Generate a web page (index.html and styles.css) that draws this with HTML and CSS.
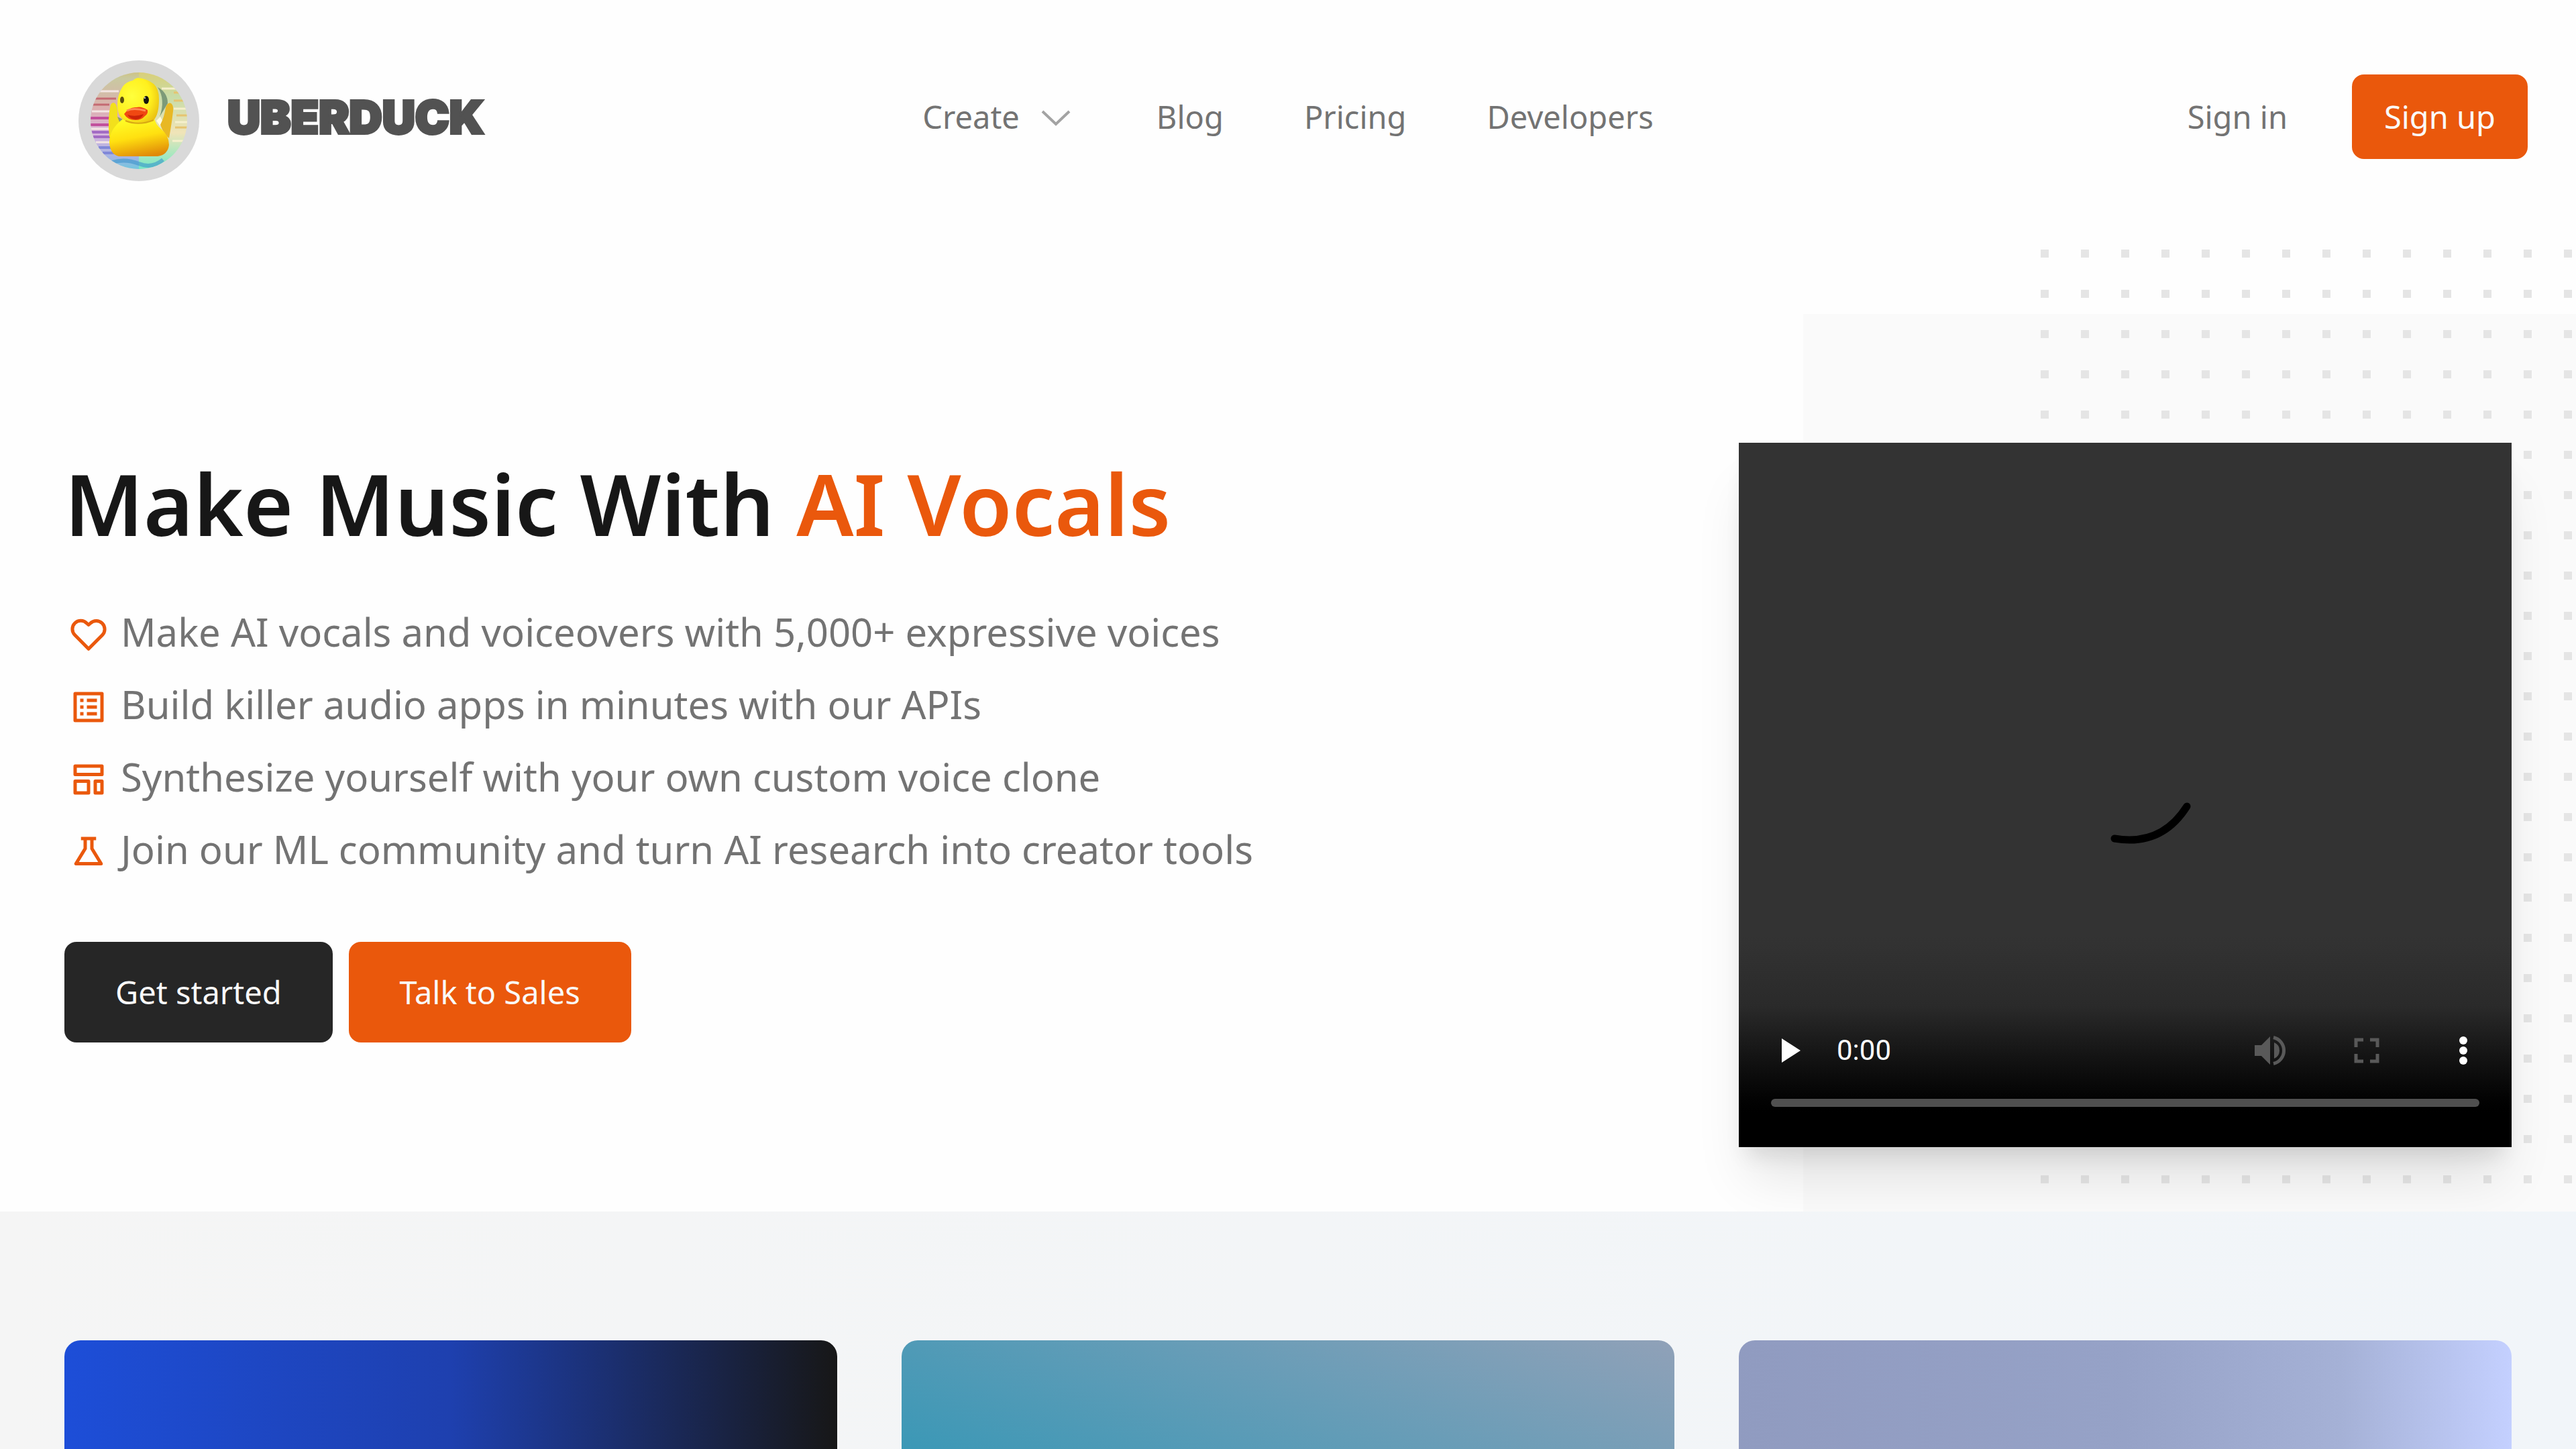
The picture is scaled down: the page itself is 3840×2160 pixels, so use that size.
FILE: index.html
```html
<!DOCTYPE html>
<html lang="en">
<head>
    <meta charset="UTF-8">
    <meta name="viewport" content="width=device-width, initial-scale=1.0">
    <title>Uberduck | Make Music With AI Vocals</title>
    <link rel="stylesheet" href="styles.css">
</head>
<body>
    <header class="header">
        <a href="#" class="logo">
            <svg class="logo-image" viewBox="0 0 180 180" aria-hidden="true">
                <defs>
                    <clipPath id="logoClip"><circle cx="90" cy="90" r="72"/></clipPath>
                    <linearGradient id="rainbow" x1="0" y1="0" x2="0" y2="1">
                        <stop offset="0" stop-color="#d9b84a"/>
                        <stop offset=".15" stop-color="#c9c9a0"/>
                        <stop offset=".4" stop-color="#dcb0b0"/>
                        <stop offset=".6" stop-color="#d9b4dc"/>
                        <stop offset=".8" stop-color="#a4b4e4"/>
                        <stop offset="1" stop-color="#3fd8d8"/>
                    </linearGradient>
                    <linearGradient id="rainbowRight" x1="0" y1="0" x2="0" y2="1">
                        <stop offset="0" stop-color="#e2c860"/>
                        <stop offset=".3" stop-color="#c8dca8"/>
                        <stop offset=".6" stop-color="#f0e4b8"/>
                        <stop offset=".8" stop-color="#a0e8c0"/>
                        <stop offset="1" stop-color="#48e4cc"/>
                    </linearGradient>
                    <radialGradient id="duckHead" cx=".35" cy=".4" r=".75">
                        <stop offset="0" stop-color="#ffff3c"/>
                        <stop offset=".6" stop-color="#fff01e"/>
                        <stop offset="1" stop-color="#e8bc10"/>
                    </radialGradient>
                    <linearGradient id="duckBody" x1=".3" y1="0" x2=".6" y2="1">
                        <stop offset="0" stop-color="#ffff28"/>
                        <stop offset=".5" stop-color="#ffe010"/>
                        <stop offset="1" stop-color="#e08a08"/>
                    </linearGradient>
                </defs>
                <circle cx="90" cy="90" r="90" fill="#d9d9d9"/>
                <g clip-path="url(#logoClip)">
                    <rect width="92" height="180" fill="url(#rainbow)"/>
                    <rect x="90" width="90" height="180" fill="url(#rainbowRight)"/>
                    <path d="M22 57h34M18 66h28" stroke="#c46a72" stroke-width="3"/>
                    <path d="M16 86h30M16 96h30" stroke="#c2509c" stroke-width="4"/>
                    <path d="M18 107h30M22 114h26" stroke="#a26cc4" stroke-width="4"/>
                    <path d="M30 130h22M36 138h20" stroke="#8088d8" stroke-width="4"/>
                    <path d="M20 76h28M18 102h28M26 122h24M30 46h30" stroke="#f3e6e4" stroke-width="3"/>
                    <path d="M142 48h16M142 60h20M146 82h18M144 100h18" stroke="#e6c470" stroke-width="3"/>
                    <path d="M124 42h26M142 72h22M144 92h20M140 120h18" stroke="#f6f0cc" stroke-width="3"/>
                    <path d="M50 152q20-6 40 2t36-6" stroke="#3a94cc" stroke-opacity=".6" stroke-width="6" fill="none"/>
                    <path d="M118 40q12 18 3 44l12-20q0-16-15-24z" fill="#7c9a78"/>
                    <path d="M58 84l8 4-6 6z" fill="#8c9c70"/>
                    <path d="M116 90l6-6 4 8-4 6z" fill="#fffbe0"/>
                    <path d="M46 114q-3-28 2-48 4-6 8 0 3 6 2 18l4 10q-6 10-12 22z" fill="#f2e01c"/>
                    <path d="M122 96q6-12 8-26 3-8 8-6 4 3 3 12-2 18-6 40-8-6-13-20z" fill="#e8b824"/>
                    <path d="M68 86q-22 16-22 36 1 18 14 21h58q15-2 17-17 0-14-12-24-8-6-10-16z" fill="url(#duckBody)"/>
                    <path d="M88 26q-4 1-7 4-10 2-15 9-8 12-8 27 0 18 10 23 20 10 44 0 8-8 8-31 0-16-8-23-10-8-24-9z" fill="url(#duckHead)"/>
                    <path d="M70 90q20 8 42-1" stroke="#d8a814" stroke-width="2" fill="none"/>
                    <path d="M68 80q8-11 18-10 8-2 17 4 1 6-4 9-5 6-14 6-12 0-17-9z" fill="#f04812"/>
                    <path d="M73 81q11 4 24-1-3 7-11 8-9 0-13-7z" fill="#cc2408"/>
                    <path d="M72 75q10-5 28 0" stroke="#ff8a50" stroke-width="3" fill="none"/>
                    <ellipse cx="65" cy="59" rx="3" ry="5" fill="#5c5010"/>
                    <ellipse cx="101" cy="59" rx="4" ry="6" fill="#14140c"/>
                    <circle cx="99" cy="56" r="1" fill="#fff"/>
                </g>
            </svg>
            <span class="logo-text">UBERDUCK</span>
        </a>

        <nav class="nav">
            <button type="button" class="nav-link nav-button">
                Create
                <svg class="chevron" viewBox="0 0 60 60" aria-hidden="true"><path d="M10 22l20 19 20-19"/></svg>
            </button>
            <a href="#" class="nav-link">Blog</a>
            <a href="#" class="nav-link">Pricing</a>
            <a href="#" class="nav-link">Developers</a>
        </nav>

        <div class="account">
            <a href="#" class="nav-link">Sign in</a>
            <a href="#" class="button button-signup">Sign up</a>
        </div>
    </header>

    <main class="main">
        <section class="hero">
            <!-- background decoration -->
            <div class="hero-panel"></div>
            <svg class="hero-dots" aria-hidden="true">
                <defs>
                    <pattern id="dots" width="60" height="60" patternUnits="userSpaceOnUse">
                        <rect width="12" height="12"/>
                    </pattern>
                </defs>
                <rect width="100%" height="100%" fill="url(#dots)"/>
            </svg>

            <div class="hero-content">
                <h1>Make Music With <span class="accent">AI Vocals</span></h1>
                <ul class="features">
                    <li>
                        <svg class="feature-icon" viewBox="0 0 24 24" aria-hidden="true"><path d="M12 20.500L3.800 12.200a5 5 0 0 1 0-7A5 5 0 0 1 11 5.300L12 6.200l1-.9a5 5 0 0 1 7.200 0 5 5 0 0 1 0 7z"/></svg>
                        Make AI vocals and voiceovers with 5,000+ expressive voices
                    </li>
                    <li>
                        <svg class="feature-icon" viewBox="0 0 24 24" aria-hidden="true"><rect x="4" y="4" width="16" height="16"/><path d="M7 8h2M11 8h6M7 12h2M11 12h6M7 16h2M11 16h6"/></svg>
                        Build killer audio apps in minutes with our APIs
                    </li>
                    <li>
                        <svg class="feature-icon" viewBox="0 0 24 24" aria-hidden="true"><rect x="4" y="4" width="16" height="5"/><rect x="4" y="13" width="8" height="7"/><rect x="16" y="13" width="4" height="7"/></svg>
                        Synthesize yourself with your own custom voice clone
                    </li>
                    <li>
                        <svg class="feature-icon" viewBox="0 0 24 24" aria-hidden="true"><path d="M7.500 4h9M10 4v6L4.500 19h15L14 10V4"/></svg>
                        Join our ML community and turn AI research into creator tools
                    </li>
                </ul>
                <div class="actions">
                    <a href="#" class="button button-dark">Get started</a>
                    <a href="#" class="button">Talk to Sales</a>
                </div>
            </div>

            <div class="player">
                <svg class="spinner" viewBox="-120 -120 240 240" aria-hidden="true"><path d="M-16 65Q54 77 92 17"/></svg>
                <div class="controls">
                    <button type="button" class="control" aria-label="Play">
                        <svg viewBox="0 0 60 60"><path d="M16 12v36l28-18z"/></svg>
                    </button>
                    <span class="time">0:00</span>
                    <button type="button" class="control control-muted control-right" aria-label="Mute">
                        <svg viewBox="0 0 60 60"><path d="M7 22v16h10l13 13V9L17 22zM36 18v24a13 13 0 0 0 0-24z"/><path class="line" d="M35 10.500a20 20 0 0 1 0 39"/></svg>
                    </button>
                    <button type="button" class="control control-muted" aria-label="Full screen">
                        <svg viewBox="0 0 60 60"><path class="line" d="M14 25V14h11M35 14h11v11M46 35v11H35M25 46H14V35"/></svg>
                    </button>
                    <button type="button" class="control" aria-label="More options">
                        <svg viewBox="0 0 60 60"><circle cx="30" cy="15" r="6"/><circle cx="30" cy="30" r="6"/><circle cx="30" cy="45" r="6"/></svg>
                    </button>
                </div>
                <div class="timeline"></div>
            </div>
        </section>

        <section class="cards">
            <a href="#" class="card card-blue" aria-label="Card 1"></a>
            <a href="#" class="card card-teal" aria-label="Card 2"></a>
            <a href="#" class="card card-lavender" aria-label="Card 3"></a>
        </section>
    </main>
</body>
</html>
```
FILE: styles.css
```css
* {
    margin: 0;
    padding: 0;
    box-sizing: border-box;
}

body {
    display: flex;
    flex-direction: column;
    min-height: 100vh;
    font-family: "Noto Sans", "Open Sans", sans-serif;
    font-size: 47px;
    line-height: 72px;
    background: #fefefe;
    color: #737373;
    overflow-x: hidden;
}

a {
    color: inherit;
    text-decoration: none;
}

button {
    font: inherit;
    color: inherit;
    background: none;
    border: none;
    cursor: pointer;
}

/* header */
.header {
    display: grid;
    grid-template-columns: 1fr auto 1fr;
    align-items: center;
    padding: 78px 72px 0;
}

.logo {
    display: flex;
    align-items: center;
    gap: 42px;
    padding-left: 45px;
}

.logo-image {
    width: 180px;
    height: 180px;
    margin-top: 12px;
}

.logo-text {
    font-family: Inter, sans-serif;
    font-size: 68px;
    font-weight: 900;
    color: #525252;
    -webkit-text-stroke: 4px #525252;
}

.nav {
    display: flex;
    align-items: center;
    gap: 120px;
}

.nav-button {
    display: flex;
    align-items: center;
    gap: 24px;
}

.chevron {
    width: 60px;
    height: 60px;
    fill: none;
    stroke: #a3a3a3;
    stroke-width: 4;
}

.account {
    display: flex;
    align-items: center;
    justify-content: flex-end;
    gap: 96px;
}

.button {
    padding: 39px 76px;
    border-radius: 18px;
    background: #ea580c;
    color: #fafafa;
}

.button-signup {
    padding: 27px 48px;
}

.button-dark {
    background: #262626;
}

/* hero */
.main {
    flex: 1;
    display: flex;
    flex-direction: column;
}

.hero {
    position: relative;
    display: grid;
    grid-template-columns: repeat(3, 1fr);
    column-gap: 96px;
    padding: 390px 96px 96px;
}

.hero-panel {
    position: absolute;
    top: 198px;
    right: 0;
    bottom: 0;
    width: 30%;
    background: #fafafa;
}

.hero-dots {
    position: absolute;
    top: 102px;
    right: 0;
    width: 798px;
    height: 1400px;
    fill: #e5e5e5;
}

.hero-content {
    grid-column: span 2;
    position: relative;
    padding-top: 18px;
}

h1 {
    font-size: 127px;
    font-weight: 600;
    line-height: 144px;
    color: #171717;
}

.accent {
    color: #ea580c;
}

.features {
    margin-top: 66px;
    list-style: none;
    font-size: 58px;
    line-height: 108px;
}

.features li {
    display: flex;
    align-items: center;
    gap: 18px;
    padding-left: 6px;
}

.feature-icon {
    width: 60px;
    height: 60px;
    margin-top: 8px;
    fill: none;
    stroke: #ea580c;
    stroke-width: 2;
    stroke-linejoin: round;
}

.actions {
    display: flex;
    gap: 24px;
    margin-top: 84px;
}

/* video player */
.player {
    position: relative;
    display: flex;
    flex-direction: column;
    justify-content: flex-end;
    height: 1050px;
    padding: 0 48px 60px;
    background: linear-gradient(to bottom, #333 70%, #2a2a2a 80%, #141414 87%, #030303 93%, #000 95%);
    box-shadow: 0 60px 75px -15px rgba(0,0,0,0.1), 0 24px 30px -12px rgba(0,0,0,0.1);
}

.spinner {
    position: absolute;
    inset: 0;
    width: 240px;
    height: 240px;
    margin: auto;
    fill: none;
    stroke: #000;
    stroke-width: 11;
    stroke-linecap: round;
}

.controls {
    display: flex;
    align-items: center;
    gap: 84px;
    margin: 0 -6px 42px 0;
}

.control {
    width: 60px;
    height: 60px;
    color: #fff;
}

.control svg {
    display: block;
    fill: currentColor;
}

.control .line {
    fill: none;
    stroke: currentColor;
    stroke-width: 5;
}

.control-muted {
    color: #595959;
}

.control-right {
    margin-left: auto;
}

.time {
    margin-left: -46px;
    font-family: Roboto, sans-serif;
    font-size: 42px;
    line-height: 60px;
    color: #fff;
}

.timeline {
    height: 12px;
    border-radius: 6px;
    background: #505050;
}

/* cards */
.cards {
    position: relative;
    flex: 1;
    display: grid;
    grid-template-columns: repeat(3, 1fr);
    gap: 96px;
    padding: 192px 96px 0;
    background: linear-gradient(to right, #f5f5f5, #f1f5f9);
}

.card {
    border-radius: 24px 24px 0 0;
}

.card-blue {
    background: linear-gradient(to right, #1d4ed8, #1e40af 50%, #171717);
}

.card-teal {
    background: linear-gradient(23deg, #3b98b6, #90a1b8);
}

.card-lavender {
    background: linear-gradient(to right, #909bc0, #96a2c7 50%, #a5b1d6 78%, #c4d0ff);
}
```
